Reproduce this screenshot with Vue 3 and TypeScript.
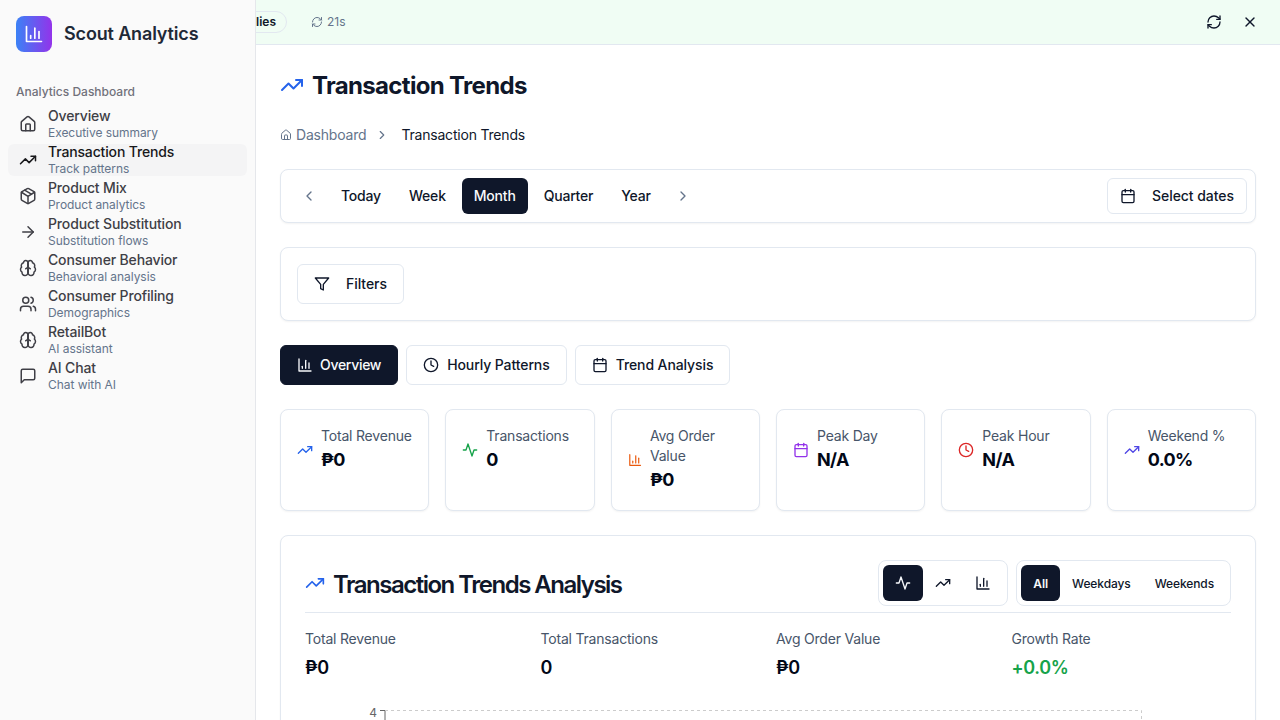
<script setup lang="ts">
const icons: Record<string, string> = {
  home: '<path d="M15 21v-8a1 1 0 0 0-1-1h-4a1 1 0 0 0-1 1v8"/><path d="M3 10a2 2 0 0 1 .709-1.528l7-5.999a2 2 0 0 1 2.582 0l7 5.999A2 2 0 0 1 21 10v9a2 2 0 0 1-2 2H5a2 2 0 0 1-2-2z"/>',
  trend: '<polyline points="22 7 13.5 15.5 8.5 10.5 2 17"/><polyline points="16 7 22 7 22 13"/>',
  box: '<path d="M11 21.73a2 2 0 0 0 2 0l7-4A2 2 0 0 0 21 16V8a2 2 0 0 0-1-1.73l-7-4a2 2 0 0 0-2 0l-7 4A2 2 0 0 0 3 8v8a2 2 0 0 0 1 1.73z"/><path d="M12 22V12"/><path d="m3.3 7 7.703 4.734a2 2 0 0 0 1.994 0L20.7 7"/><path d="m7.5 4.27 9 5.15"/>',
  arrow: '<path d="M5 12h14"/><path d="m12 5 7 7-7 7"/>',
  brain: '<path d="M12 5a3 3 0 1 0-5.997.125 4 4 0 0 0-2.526 5.77 4 4 0 0 0 .556 6.588A4 4 0 1 0 12 18Z"/><path d="M12 5a3 3 0 1 1 5.997.125 4 4 0 0 1 2.526 5.77 4 4 0 0 1-.556 6.588A4 4 0 1 1 12 18Z"/><path d="M15 13a4.5 4.5 0 0 1-3-4 4.5 4.5 0 0 1-3 4"/><path d="M12 5v13"/>',
  users: '<path d="M16 21v-2a4 4 0 0 0-4-4H6a4 4 0 0 0-4 4v2"/><circle cx="9" cy="7" r="4"/><path d="M22 21v-2a4 4 0 0 0-3-3.87"/><path d="M16 3.13a4 4 0 0 1 0 7.75"/>',
  chat: '<path d="M21 15a2 2 0 0 1-2 2H7l-4 4V5a2 2 0 0 1 2-2h14a2 2 0 0 1 2 2z"/>',
  bars: '<path d="M3 3v18h18"/><path d="M18 17V9"/><path d="M13 17V5"/><path d="M8 17v-3"/>',
  clock: '<circle cx="12" cy="12" r="10"/><polyline points="12 6 12 12 16 14"/>',
  calendar: '<path d="M8 2v4"/><path d="M16 2v4"/><rect x="3" y="4" width="18" height="18" rx="2"/><path d="M3 10h18"/>',
  filter: '<polygon points="22 3 2 3 10 12.46 10 19 14 21 14 12.46 22 3"/>',
  activity: '<path d="M22 12h-4l-3 9L9 3l-3 9H2"/>',
  refresh: '<path d="M3 12a9 9 0 0 1 9-9 9.75 9.75 0 0 1 6.74 2.74L21 8"/><path d="M21 3v5h-5"/><path d="M21 12a9 9 0 0 1-9 9 9.75 9.75 0 0 1-6.74-2.74L3 16"/><path d="M8 16H3v5"/>',
  close: '<path d="M18 6 6 18"/><path d="m6 6 12 12"/>',
  left: '<path d="m15 18-6-6 6-6"/>',
  right: '<path d="m9 18 6-6-6-6"/>',
}

const navItems = [
  { icon: 'home', label: 'Overview', sub: 'Executive summary' },
  { icon: 'trend', label: 'Transaction Trends', sub: 'Track patterns', active: true },
  { icon: 'box', label: 'Product Mix', sub: 'Product analytics' },
  { icon: 'arrow', label: 'Product Substitution', sub: 'Substitution flows' },
  { icon: 'brain', label: 'Consumer Behavior', sub: 'Behavioral analysis' },
  { icon: 'users', label: 'Consumer Profiling', sub: 'Demographics' },
  { icon: 'brain', label: 'RetailBot', sub: 'AI assistant' },
  { icon: 'chat', label: 'AI Chat', sub: 'Chat with AI' },
]

const periods = ['Today', 'Week', 'Month', 'Quarter', 'Year']

const tabs = [
  { icon: 'bars', label: 'Overview', active: true },
  { icon: 'clock', label: 'Hourly Patterns' },
  { icon: 'calendar', label: 'Trend Analysis' },
]

const kpis = [
  { icon: 'trend', color: '#2563eb', label: 'Total Revenue', value: '₱0' },
  { icon: 'activity', color: '#16a34a', label: 'Transactions', value: '0' },
  { icon: 'bars', color: '#ea580c', label: 'Avg Order Value', value: '₱0' },
  { icon: 'calendar', color: '#9333ea', label: 'Peak Day', value: 'N/A' },
  { icon: 'clock', color: '#dc2626', label: 'Peak Hour', value: 'N/A' },
  { icon: 'trend', color: '#4f46e5', label: 'Weekend %', value: '0.0%' },
]

const stats = [
  { label: 'Total Revenue', value: '₱0' },
  { label: 'Total Transactions', value: '0' },
  { label: 'Avg Order Value', value: '₱0' },
  { label: 'Growth Rate', value: '+0.0%', up: true },
]
</script>

<template>
  <div class="app">
    <aside class="sidebar">
      <div class="brand">
        <span class="logo">
          <svg class="ic ic-20" viewBox="0 0 24 24" v-html="icons.bars"></svg>
        </span>
        <span class="brand-name">Scout Analytics</span>
      </div>
      <div class="group-label">Analytics Dashboard</div>
      <nav class="nav">
        <div v-for="item in navItems" :key="item.label" class="nav-item" :class="{ active: item.active }">
          <svg class="ic ic-18" viewBox="0 0 24 24" v-html="icons[item.icon]"></svg>
          <div class="nav-text">
            <div class="nav-label">{{ item.label }}</div>
            <div class="nav-sub">{{ item.sub }}</div>
          </div>
        </div>
      </nav>
    </aside>

    <header class="banner">
      <div class="banner-left">
        <span class="pill">0 anomalies</span>
        <span class="timer">
          <svg class="ic ic-12" viewBox="0 0 24 24" v-html="icons.refresh"></svg>
          <span class="lbl">21s</span>
        </span>
      </div>
      <div class="banner-right">
        <svg class="ic ic-16" viewBox="0 0 24 24" v-html="icons.refresh"></svg>
        <svg class="ic ic-16" viewBox="0 0 24 24" v-html="icons.close"></svg>
      </div>
    </header>

    <main class="main">
      <h1 class="page-title">
        <svg class="ic ic-24 blue" viewBox="0 0 24 24" v-html="icons.trend"></svg>
        <span class="title-text">Transaction Trends</span>
      </h1>

      <div class="crumbs">
        <svg class="ic ic-12" viewBox="0 0 24 24" v-html="icons.home"></svg>
        <span class="crumb-link lbl">Dashboard</span>
        <svg class="ic ic-14 crumb-sep" viewBox="0 0 24 24" v-html="icons.right"></svg>
        <span class="crumb-now lbl">Transaction Trends</span>
      </div>

      <section class="card period-bar">
        <div class="periods">
          <span class="chev"><svg class="ic ic-16" viewBox="0 0 24 24" v-html="icons.left"></svg></span>
          <div class="period-list">
            <button v-for="p in periods" :key="p" class="period" :class="{ on: p === 'Month' }">{{ p }}</button>
          </div>
          <span class="chev"><svg class="ic ic-16" viewBox="0 0 24 24" v-html="icons.right"></svg></span>
        </div>
        <button class="btn btn-dates">
          <svg class="ic ic-16" viewBox="0 0 24 24" v-html="icons.calendar"></svg>
          <span class="lbl">Select dates</span>
        </button>
      </section>

      <section class="card filter-bar">
        <button class="btn btn-filter">
          <svg class="ic ic-16" viewBox="0 0 24 24" v-html="icons.filter"></svg>
          <span class="lbl">Filters</span>
        </button>
      </section>

      <div class="tabs">
        <button v-for="t in tabs" :key="t.label" class="tab" :class="{ on: t.active }">
          <svg class="ic ic-16" viewBox="0 0 24 24" v-html="icons[t.icon]"></svg>
          <span class="lbl">{{ t.label }}</span>
        </button>
      </div>

      <div class="kpis">
        <div v-for="k in kpis" :key="k.label" class="card kpi">
          <div class="kpi-row">
            <svg class="ic ic-16 kpi-icon" viewBox="0 0 24 24" :style="{ color: k.color }" v-html="icons[k.icon]"></svg>
            <div>
              <div class="kpi-label">{{ k.label }}</div>
              <div class="kpi-value">{{ k.value }}</div>
            </div>
          </div>
        </div>
      </div>

      <section class="card chart-card">
        <div class="chart-head">
          <h2 class="chart-title">
            <svg class="ic ic-20 blue" viewBox="0 0 24 24" v-html="icons.trend"></svg>
            <span class="title-text">Transaction Trends Analysis</span>
          </h2>
          <div class="toggles">
            <div class="toggle">
              <button class="tg tg-icon on"><svg class="ic ic-16" viewBox="0 0 24 24" v-html="icons.activity"></svg></button>
              <button class="tg tg-icon"><svg class="ic ic-16" viewBox="0 0 24 24" v-html="icons.trend"></svg></button>
              <button class="tg tg-icon"><svg class="ic ic-16" viewBox="0 0 24 24" v-html="icons.bars"></svg></button>
            </div>
            <div class="toggle">
              <button class="tg on">All</button>
              <button class="tg">Weekdays</button>
              <button class="tg">Weekends</button>
            </div>
          </div>
        </div>

        <div class="stats">
          <div v-for="s in stats" :key="s.label">
            <div class="stat-label">{{ s.label }}</div>
            <div class="stat-value" :class="{ up: s.up }">{{ s.value }}</div>
          </div>
        </div>

        <svg class="plot" viewBox="0 0 926 20" width="926" height="20">
          <text x="72" y="14" text-anchor="end" class="tick">4</text>
          <path d="M75 7.5h5M80 7v13" class="axis" />
          <path d="M80 7.5H836.5V20" class="grid" />
        </svg>
      </section>
    </main>
  </div>
</template>

<style>
html, body {
  margin: 0;
  height: 720px;
  overflow: hidden;
  background: #fff;
}
</style>

<style scoped>
* { box-sizing: border-box; }

.app {
  position: relative;
  width: 1280px;
  height: 720px;
  overflow: hidden;
  font-family: Inter, "Liberation Sans", sans-serif;
  color: #0f172a;
}

.ic {
  flex: none;
  fill: none;
  stroke: currentColor;
  stroke-width: 2;
  stroke-linecap: round;
  stroke-linejoin: round;
  display: block;
}
.ic-12 { width: 12px; height: 12px; }
.ic-14 { width: 14px; height: 14px; }
.ic-16 { width: 16px; height: 16px; }
.ic-18 { width: 18px; height: 18px; }
.ic-20 { width: 20px; height: 20px; }
.ic-24 { width: 24px; height: 24px; }
.blue { color: #2563eb; }
.lbl { margin-bottom: 2px; }

/* Sidebar lies over the banner */
.sidebar {
  position: absolute;
  left: 0;
  top: 0;
  bottom: 0;
  z-index: 2;
  width: 256px;
  background: #fafafa;
  border-right: 1px solid #e5e7eb;
}
.brand {
  display: flex;
  align-items: center;
  gap: 12px;
  padding: 16px;
}
.logo {
  width: 36px;
  height: 36px;
  border-radius: 8px;
  background: linear-gradient(90deg, #3b82f6, #9333ea);
  color: #fff;
  display: flex;
  align-items: center;
  justify-content: center;
}
.brand-name {
  margin-bottom: 2px;
  font-size: 18px;
  font-weight: 600;
  letter-spacing: -0.15px;
  color: #1f2937;
}
.group-label {
  margin-top: 16px;
  padding: 0 16px;
  font-size: 12px;
  line-height: 16px;
  font-weight: 500;
  color: #71717a;
}
.nav {
  margin-top: 8px;
  padding: 0 8px;
  display: flex;
  flex-direction: column;
  gap: 4px;
}
.nav-item {
  height: 32px;
  display: flex;
  align-items: center;
  gap: 11px;
  padding-left: 11px;
  border-radius: 6px;
  color: #3f3f46;
}
.nav-item.active {
  background: #f4f4f5;
  color: #18181b;
}
.nav-label {
  font-size: 14px;
  line-height: 16px;
  font-weight: 500;
  letter-spacing: -0.15px;
  white-space: nowrap;
}
.nav-sub {
  margin-top: 1px;
  font-size: 12px;
  line-height: 16px;
  letter-spacing: -0.05px;
  color: #64748b;
  white-space: nowrap;
}

.banner {
  height: 45px;
  background: #f0fdf4;
  border-bottom: 1px solid #e2e8f0;
  display: flex;
  align-items: center;
  justify-content: space-between;
  padding: 0 22px 0 187px;
}
.banner-left {
  display: flex;
  align-items: center;
  gap: 24px;
}
.pill {
  width: 100px;
  height: 22px;
  padding: 0 10px 1px;
  display: flex;
  align-items: center;
  justify-content: flex-end;
  border: 1px solid #e2e8f0;
  border-radius: 999px;
  font-size: 12px;
  font-weight: 600;
  white-space: nowrap;
}
.timer {
  display: flex;
  align-items: center;
  gap: 4px;
  font-size: 12px;
  color: #64748b;
}
.banner-right {
  display: flex;
  align-items: center;
  gap: 20px;
}

.main {
  margin-left: 256px;
  padding: 24px;
}
.page-title {
  margin: 0;
  display: flex;
  align-items: center;
  gap: 8px;
  font-size: 24px;
  line-height: 32px;
  font-weight: 700;
  letter-spacing: -0.67px;
}
.title-text {
  padding-top: 2px;
  line-height: 30px;
}
.crumbs {
  margin-top: 24px;
  height: 20px;
  display: flex;
  align-items: center;
  font-size: 14px;
  letter-spacing: -0.2px;
  color: #64748b;
}
.crumb-link { margin-left: 4px; }
.crumb-sep { margin: 0 12px 0 9px; }
.crumb-now { color: #0f172a; }

.card {
  border: 1px solid #e2e8f0;
  border-radius: 8px;
  background: #fff;
  box-shadow: 0 1px 2px rgba(0, 0, 0, 0.05);
}
button {
  font-family: inherit;
  color: inherit;
  background: none;
  border: 0;
  padding: 0;
}
.btn {
  display: flex;
  align-items: center;
  border: 1px solid #e2e8f0;
  border-radius: 6px;
  background: #fff;
  font-size: 14px;
  font-weight: 500;
  letter-spacing: -0.05px;
}

.period-bar {
  margin-top: 24px;
  height: 54px;
  padding: 0 8px;
  display: flex;
  align-items: center;
  justify-content: space-between;
}
.periods {
  display: flex;
  align-items: center;
}
.chev {
  width: 40px;
  display: flex;
  justify-content: center;
  color: #64748b;
}
.period-list {
  display: flex;
  gap: 4px;
}
.period {
  height: 36px;
  padding: 0 12px 2px;
  border-radius: 6px;
  font-size: 14px;
  font-weight: 500;
  letter-spacing: -0.2px;
}
.period.on {
  background: #0f172a;
  color: #f8fafc;
}
.btn-dates {
  height: 36px;
  padding: 0 12px;
  gap: 16px;
}

.filter-bar {
  margin-top: 24px;
  padding: 16px;
}
.btn-filter {
  height: 40px;
  padding: 0 16px;
  gap: 16px;
}

.tabs {
  margin-top: 24px;
  display: flex;
  gap: 8px;
}
.tab {
  height: 40px;
  padding: 0 16px;
  display: flex;
  align-items: center;
  gap: 8px;
  border: 1px solid #e2e8f0;
  border-radius: 6px;
  font-size: 14px;
  font-weight: 500;
  letter-spacing: -0.1px;
}
.tab.on {
  gap: 7px;
  letter-spacing: -0.3px;
  background: #0f172a;
  border-color: #0f172a;
  color: #f8fafc;
}

.kpis {
  margin-top: 24px;
  display: grid;
  grid-template-columns: repeat(6, 1fr);
  gap: 16px;
}
.kpi {
  padding: 16px;
}
.kpi-row {
  display: flex;
  align-items: center;
  gap: 8px;
}
/* the icon gives way when the label is long, as on Avg Order Value */
.kpi-icon { flex: 0 1 16px; }
.kpi-label {
  font-size: 14px;
  line-height: 20px;
  letter-spacing: -0.2px;
  color: #475569;
}
.kpi-value {
  font-size: 18px;
  line-height: 28px;
  font-weight: 700;
  letter-spacing: -0.6px;
  color: #020817;
}

.chart-card {
  margin-top: 24px;
  padding: 24px;
}
.chart-head {
  display: flex;
  align-items: center;
  justify-content: space-between;
  padding-bottom: 6px;
  border-bottom: 1px solid #e2e8f0;
}
.chart-title {
  margin: 0;
  display: flex;
  align-items: center;
  gap: 8px;
  font-size: 24px;
  line-height: 32px;
  font-weight: 600;
  letter-spacing: -1.5px;
}
.chart-title .title-text { padding-top: 3px; }
.toggles {
  display: flex;
  gap: 8px;
}
.toggle {
  display: flex;
  padding: 4px;
  border: 1px solid #e2e8f0;
  border-radius: 8px;
}
.tg {
  height: 36px;
  padding: 0 12px;
  border-radius: 6px;
  font-size: 12px;
  font-weight: 500;
  letter-spacing: -0.1px;
}
.tg-icon {
  width: 40px;
  display: flex;
  align-items: center;
  justify-content: center;
}
.tg.on {
  background: #0f172a;
  color: #f8fafc;
  font-weight: 600;
}

.stats {
  margin-top: 16px;
  display: grid;
  grid-template-columns: repeat(4, 1fr);
  gap: 16px;
}
.stat-label {
  font-size: 14px;
  line-height: 20px;
  letter-spacing: -0.2px;
  color: #475569;
}
.stat-value {
  margin-top: 5px;
  font-size: 18px;
  line-height: 28px;
  font-weight: 600;
  letter-spacing: -0.35px;
  color: #020817;
}
.stat-value.up { color: #16a34a; }

.plot {
  margin-top: 21px;
  display: block;
  overflow: visible;
}
.tick {
  font-size: 12px;
  fill: #666;
}
.axis {
  fill: none;
  stroke: #666;
}
.grid {
  fill: none;
  stroke: #ccc;
  stroke-dasharray: 3 3;
}
</style>
